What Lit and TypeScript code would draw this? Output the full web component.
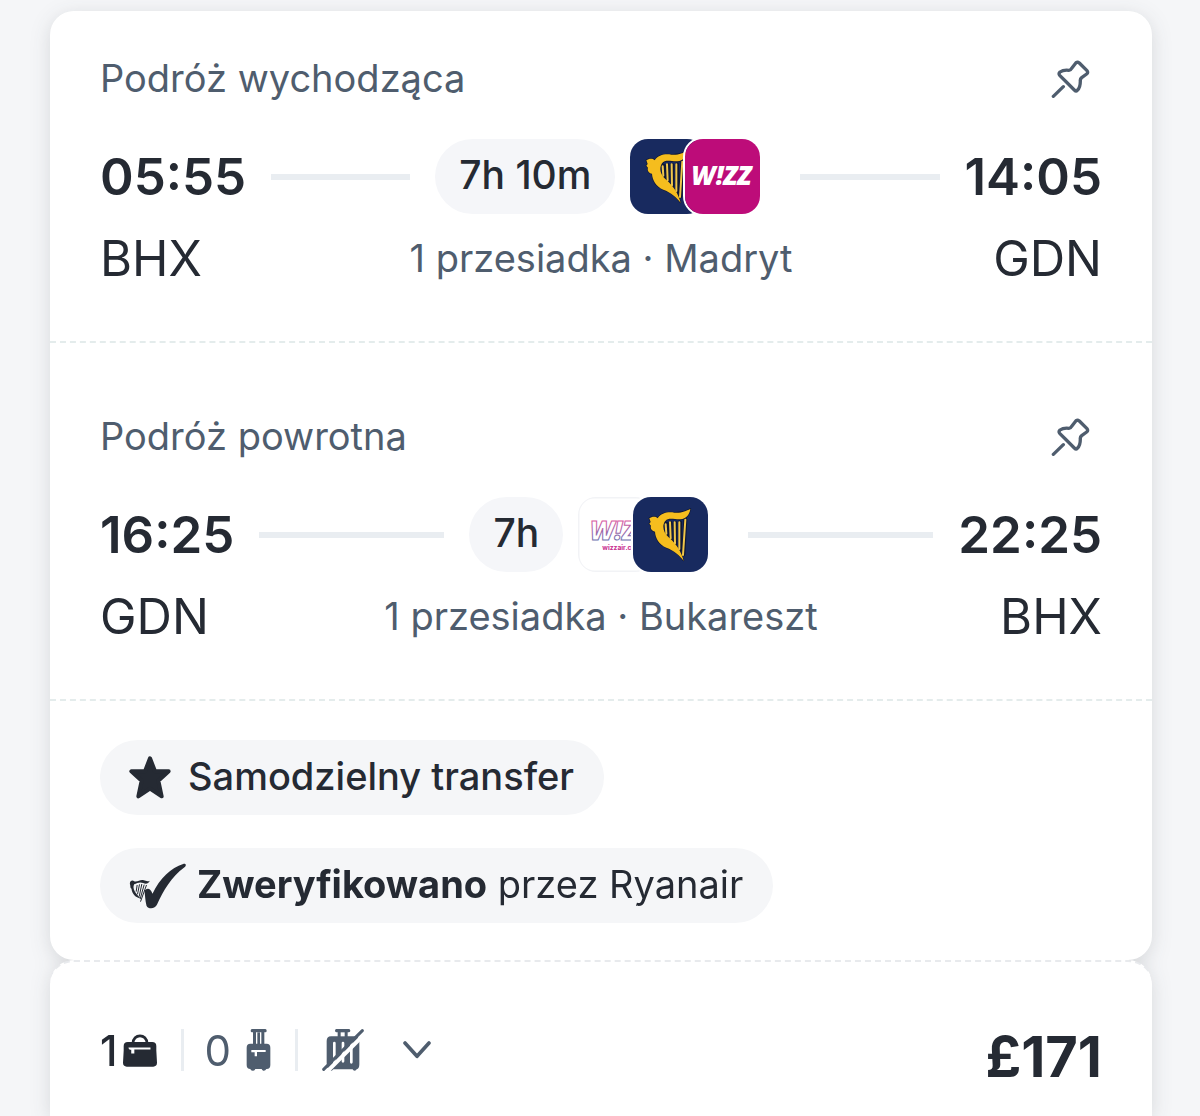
import { LitElement, html, css, svg } from "lit";
import { customElement, property } from "lit/decorators.js";

type Carrier = "ryanair" | "wizz" | "wizz-light";

interface Leg {
  title: string;
  depart: string;
  arrive: string;
  from: string;
  to: string;
  duration: string;
  stops: string;
  carriers: Carrier[];
}

const LEGS: Leg[] = [
  {
    title: "Podróż wychodząca",
    depart: "05:55",
    arrive: "14:05",
    from: "BHX",
    to: "GDN",
    duration: "7h 10m",
    stops: "1 przesiadka · Madryt",
    carriers: ["ryanair", "wizz"],
  },
  {
    title: "Podróż powrotna",
    depart: "16:25",
    arrive: "22:25",
    from: "GDN",
    to: "BHX",
    duration: "7h",
    stops: "1 przesiadka · Bukareszt",
    carriers: ["wizz-light", "ryanair"],
  },
];

const harp = svg`
  <rect width="225" height="225" fill="#182a5f"></rect>
  <g fill="none" stroke="#0f1733" stroke-width="12" stroke-linecap="round">
    <path d="M101 80V114M113 78V128M127 78V144M141 76V158M157 68L151 172"></path>
  </g>
  <path fill="#f5bd1e" stroke="#0f1733" stroke-width="4" paint-order="stroke" d="M74 64C84 48 104 44 124 47C146 49 158 42 172 36C170 52 160 66 142 67C124 68 106 60 96 73C86 88 92 108 106 120C130 140 144 162 152 192C142 176 122 160 100 152C78 142 67 124 66 104C56 102 51 94 54 86L49 80L53 75L49 64C56 58 70 57 74 64Z"></path>
  <g fill="none" stroke="#f0c64a" stroke-width="6" stroke-linecap="round">
    <path d="M98 82L100 110M111 76L113 124M125 76L126 139M139 76V156M157 68L150 174"></path>
  </g>`;

const logos = {
  ryanair: html`<svg class="mark" viewBox="0 0 225 225" role="img" aria-label="Ryanair">${harp}</svg>`,
  wizz: html`<svg class="mark" viewBox="0 0 225 225" role="img" aria-label="Wizz Air">
    <rect width="225" height="225" fill="#bd0c79"></rect>
    <text class="wordmark solid" x="19" y="138">W!ZZ</text>
  </svg>`,
  "wizz-light": html`<svg class="mark" viewBox="0 0 225 225" role="img" aria-label="Wizz Air">
    <defs>
      <linearGradient id="tint" x1="0" y1="0" x2="0" y2="1">
        <stop offset="0.2" stop-color="#e0559f"></stop>
        <stop offset="0.8" stop-color="#6c6fae"></stop>
      </linearGradient>
    </defs>
    <rect class="frame" x="2" y="2" width="221" height="221" rx="48"></rect>
    <text class="wordmark outline" x="36" y="129">W!ZZ</text>
    <text class="mark-text" x="73" y="158">wizzair.com</text>
  </svg>`,
};

const pinIcon = html`<svg class="pin" viewBox="0 0 117 117" aria-hidden="true">
  <g fill="none" stroke="#4f5d6e" stroke-width="10" stroke-linejoin="round" stroke-linecap="round">
    <path d="M75 11Q80 8 85 12L108 35Q112 41 107 45L92 56Q87 60 88 66Q88 86 79 94Q75 98 70 93L26 49Q22 44 27 39Q37 32 54 34Q59 34 61 29Z"></path>
    <path d="M37 83L7 112"></path>
  </g>
</svg>`;

const starIcon = html`<svg class="star" viewBox="0 0 126 129" aria-hidden="true">
  <path fill="#252a33" stroke="#252a33" stroke-width="12" stroke-linejoin="round" d="M63 7L78 46H119L88 74L98 121L63 98L28 121L38 74L7 46H48Z"></path>
</svg>`;

const verifiedIcon = html`<svg class="verified" viewBox="0 0 170 138" aria-hidden="true">
  <path fill="#252a33" d="M46 84C54 72 64 76 70 92C92 46 126 14 162 3C170 1 173 7 166 13C126 42 102 84 84 124C78 138 58 140 52 128C48 112 48 98 46 84Z"></path>
  <path fill="#252a33" d="M2 62C2 54 10 50 15 55C26 58 34 48 44 52C50 54 56 56 62 53C58 62 50 64 42 60C32 56 24 60 15 64C8 78 20 92 34 106C20 104 8 92 7 77C2 74 5 70 2 62Z"></path>
  <path fill="none" stroke="#252a33" stroke-width="3" d="M24 66L21 86M31 64L25 94M38 63L30 101M45 65L33 108M52 66L34 116"></path>
</svg>`;

const bagIcon = html`<svg class="bag" viewBox="0 0 99 96" aria-hidden="true">
  <path fill="none" stroke="#252a33" stroke-width="8" d="M29 28C29 -2 70 -2 70 28"></path>
  <path fill="#252a33" d="M14 23H85Q97 23 97 35V48L99 84Q99 95 88 95H11Q0 95 0 84L2 48V35Q2 23 14 23Z"></path>
  <path fill="#fff" d="M16 39H80V45H33V57H24V46Q16 46 16 39Z"></path>
</svg>`;

const cabinIcon = html`<svg class="cabin" viewBox="0 0 75 126" aria-hidden="true">
  <g fill="#4f5d6e">
    <path d="M18 0H58Q62 0 62 5Q62 10 58 10H55V46H46V10H30V46H21V10H18Q14 10 14 5Q14 0 18 0Z"></path>
    <path d="M34 10H42V46H34Z"></path>
    <path d="M13 44H62Q73 44 73 56V108Q73 120 62 120H61Q58 126 52 125Q48 124 47 120H28Q26 126 20 125Q14 125 13 120Q2 120 2 108V56Q2 44 13 44Z"></path>
  </g>
  <path fill="#fff" d="M16 63H59V69H33V82H26V70H16Z"></path>
</svg>`;

const noHoldIcon = html`<svg class="no-hold" viewBox="0 0 126 126" aria-hidden="true">
  <path fill="#4f5d6e" d="M43 0H81Q85 0 85 5Q85 9 81 10H77V22H98Q112 22 112 36V106Q112 119 104 121Q101 127 94 124L92 121H34Q30 127 25 124L22 121Q14 118 14 106V36Q14 22 27 22H47V10H43Q39 9 39 5Q39 0 43 0Z"></path>
  <path fill="#fff" d="M56 10H68V22H56Z"></path>
  <path fill="none" stroke="#fff" stroke-width="8" stroke-linecap="round" d="M37 42V100M63 42V97M88 42V100"></path>
  <path fill="none" stroke="#fff" stroke-width="12" d="M10 133L133 10"></path>
  <path fill="#fff" d="M0 104L14 104V118L0 126Z"></path>
  <path fill="none" stroke="#4f5d6e" stroke-width="9" stroke-linecap="round" d="M5 121L121 5"></path>
</svg>`;

const chevronIcon = html`<svg class="chevron" viewBox="0 0 84 54" aria-hidden="true">
  <path fill="none" stroke="#4f5d6e" stroke-width="11" stroke-linecap="round" stroke-linejoin="round" d="M6 6L42 46L78 6"></path>
</svg>`;

@customElement("trip-leg")
export class TripLeg extends LitElement {
  @property({ attribute: false }) leg!: Leg;

  static styles = css`
    :host {
      display: block;
      padding: 69px 50px 53px;
      border-bottom: 2px dashed #e4ecec;
    }
    :host(.first) {
      padding-top: 43px;
    }
    .head,
    .route {
      display: flex;
      align-items: center;
    }
    .head {
      height: 48px;
      justify-content: space-between;
      color: #4f5d6e;
    }
    h2 {
      margin: 0;
      font-size: 38px;
      line-height: 48px;
      font-weight: 400;
    }
    button {
      border: 0;
      padding: 4px 12px;
      background: none;
      display: flex;
      cursor: pointer;
    }
    .pin {
      width: 39px;
      height: 39px;
    }
    .route {
      height: 75px;
      margin-top: 37px;
    }
    time {
      font-size: 51px;
      line-height: 60px;
      font-weight: 600;
    }
    .line {
      flex: 1;
      height: 6px;
      background: #e9edf1;
      margin: 0 25px;
    }
    .line.after {
      margin-left: 38px;
    }
    .duration {
      height: 75px;
      box-sizing: border-box;
      padding: 0 24px 4px;
      border-radius: 38px;
      background: #f5f6f9;
      display: flex;
      align-items: center;
      font-size: 39px;
      font-weight: 500;
    }
    .logos {
      display: flex;
      margin-left: 13px;
    }
    .mark {
      display: block;
      width: 75px;
      height: 75px;
      border: 2px solid #fff;
      border-radius: 20px;
    }
    .mark + .mark {
      margin-left: -24px;
    }
    .frame {
      fill: #fff;
      stroke: #f2f3f6;
      stroke-width: 5px;
    }
    .mark-text {
      font: 700 20px "Inter", sans-serif;
      fill: #c72d8e;
    }
    .wordmark {
      font: italic 900 78px "Open Sans", "Inter", sans-serif;
    }
    .solid {
      fill: #fff;
    }
    .outline {
      fill: #fff;
      stroke: url(#tint);
      stroke-width: 3px;
    }
    .places {
      display: grid;
      grid-template-columns: 1fr auto 1fr;
      align-items: center;
      height: 60px;
      margin-top: 14px;
      font-size: 49px;
    }
    .stops {
      font-size: 38px;
      color: #4f5d6e;
    }
    .to {
      text-align: right;
    }
  `;

  render() {
    const l = this.leg;
    return html`
      <div class="head">
        <h2>${l.title}</h2>
        <button type="button" aria-label="Przypnij">${pinIcon}</button>
      </div>
      <div class="route">
        <time>${l.depart}</time>
        <span class="line"></span>
        <span class="duration">${l.duration}</span>
        <span class="logos">${l.carriers.map((c) => logos[c])}</span>
        <span class="line after"></span>
        <time>${l.arrive}</time>
      </div>
      <div class="places">
        <span>${l.from}</span>
        <span class="stops">${l.stops}</span>
        <span class="to">${l.to}</span>
      </div>
    `;
  }
}

@customElement("app-root")
export class AppRoot extends LitElement {
  static styles = css`
    :host {
      display: flex;
      box-sizing: border-box;
      min-height: 100vh;
      padding: 11px 48px 0 50px;
      background: #f5f6f8;
      color: #252a33;
      font-family: "Inter", "Liberation Sans", sans-serif;
    }
    .ticket {
      flex: 1;
      display: flex;
      flex-direction: column;
      filter: drop-shadow(0 4px 10px rgba(37, 42, 51, 0.14));
    }
    .card {
      background: #fff;
      border-radius: 24px;
    }
    .tags {
      display: flex;
      flex-direction: column;
      align-items: flex-start;
      gap: 33px;
      padding: 39px 50px 37px;
    }
    .tag {
      display: flex;
      align-items: center;
      height: 75px;
      border-radius: 38px;
      background: #f5f6f8;
      padding: 0 30px 0 29px;
      font-size: 38px;
    }
    .tag span {
      padding-bottom: 4px;
    }
    .medium {
      font-weight: 500;
    }
    .star {
      width: 42px;
      height: 43px;
      margin-right: 17px;
    }
    .verified {
      width: 57px;
      height: 46px;
      margin-right: 11px;
    }
    .fare {
      flex: 1;
      display: flex;
      justify-content: space-between;
      align-items: flex-start;
      padding: 60px 50px 24px;
      border-top: 2px dashed #e8eaed;
      border-radius: 24px 24px 0 0;
    }
    .bags {
      display: flex;
      align-items: center;
      height: 56px;
      font-size: 42px;
      color: #4f5d6e;
    }
    .item {
      display: flex;
      align-items: center;
    }
    .item + .item {
      margin-left: 24px;
      border-left: 3px solid #e9edf1;
      padding-left: 20px;
      height: 42px;
    }
    .included {
      color: #252a33;
      font-weight: 500;
    }
    .bag {
      width: 34px;
      height: 33px;
      margin-left: 6px;
    }
    .cabin {
      width: 25px;
      height: 42px;
      margin-left: 15px;
    }
    .no-hold {
      width: 42px;
      height: 42px;
      margin-left: 4px;
    }
    .more {
      border: 0;
      background: none;
      padding: 12px;
      margin-left: 27px;
      display: flex;
      cursor: pointer;
    }
    .chevron {
      width: 28px;
      height: 18px;
    }
    .price {
      font-size: 56px;
      line-height: 70px;
      font-weight: 700;
    }
  `;

  render() {
    return html`
      <main class="ticket">
        <section class="card">
          ${LEGS.map((leg, i) => html`<trip-leg class=${i === 0 ? "first" : ""} .leg=${leg}></trip-leg>`)}
          <div class="tags">
            <div class="tag">${starIcon}<span class="medium">Samodzielny transfer</span></div>
            <div class="tag">${verifiedIcon}<span><b>Zweryfikowano</b> przez Ryanair</span></div>
          </div>
        </section>
        <section class="card fare">
          <div class="bags">
            <span class="item included">1${bagIcon}</span>
            <span class="item">0${cabinIcon}</span>
            <span class="item">${noHoldIcon}</span>
            <button class="more" type="button" aria-label="Szczegóły bagażu">${chevronIcon}</button>
          </div>
          <div class="price">£171</div>
        </section>
      </main>
    `;
  }
}
